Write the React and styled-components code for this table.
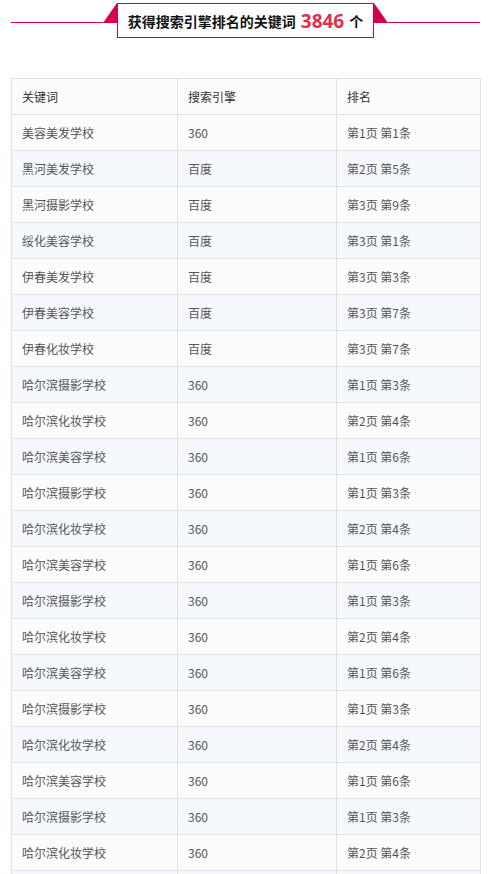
import React from "react";
import styled, { createGlobalStyle } from "styled-components";

const Global = createGlobalStyle`
  html, body { margin: 0; padding: 0; background: #fff; }
  body { font-family: "Noto Sans CJK SC", "Noto Sans", sans-serif; }
`;

const RED = "#d5004c";

const Page = styled.div`
  width: 492px;
  padding: 3px 12px 0 11px;
  box-sizing: border-box;
`;

const TitleBar = styled.div`
  display: flex;
  align-items: flex-start;
`;

const Line = styled.div`
  flex: 1;
  height: 1px;
  margin-top: 19px;
  background: ${RED};
`;

const Flap = styled.div`
  width: 14px;
  height: 20px;
  background: ${RED};
  clip-path: ${(p) =>
    p.$side === "left"
      ? "polygon(100% 0, 100% 100%, 0 100%)"
      : "polygon(0 0, 100% 100%, 0 100%)"};
`;

const Badge = styled.div`
  width: 257px;
  height: 35px;
  box-sizing: border-box;
  border: 1px solid ${RED};
  background: #fff;
  display: flex;
  align-items: center;
  justify-content: center;
  gap: 5px;
  font-size: 14px;
  font-weight: 700;
  color: #111;
  padding-top: 1px;
`;

const Count = styled.span`
  color: #e2304a;
  font-size: 19px;
  font-weight: 700;
  font-family: "Open Sans", "Noto Sans", sans-serif;
  line-height: 1;
`;

const Table = styled.table`
  margin-top: 40px;
  width: 469px;
  border-collapse: collapse;
  table-layout: fixed;
  font-size: 12px;
`;

const Row = styled.tr`
  height: 36px;
  background: ${(p) => (p.$alt ? "#f5f9fe" : "#fcfcfc")};
`;

const Cell = styled.td`
  padding: 0 0 0 10px;
  border: 1px solid #e1e1e1;
  color: ${(p) => (p.$head ? "#333" : "#555")};
  font-weight: 400;
  text-align: left;
  white-space: nowrap;
  vertical-align: middle;
`;

const rows = [
  ["美容美发学校", "360", "第1页 第1条"],
  ["黑河美发学校", "百度", "第2页 第5条"],
  ["黑河摄影学校", "百度", "第3页 第9条"],
  ["绥化美容学校", "百度", "第3页 第1条"],
  ["伊春美发学校", "百度", "第3页 第3条"],
  ["伊春美容学校", "百度", "第3页 第7条"],
  ["伊春化妆学校", "百度", "第3页 第7条"],
];
const cycle = [
  ["哈尔滨摄影学校", "360", "第1页 第3条"],
  ["哈尔滨化妆学校", "360", "第2页 第4条"],
  ["哈尔滨美容学校", "360", "第1页 第6条"],
];
for (let i = 0; i < 15; i++) rows.push(cycle[i % 3]);

const widths = [166, 159, 144];

export default function App() {
  return (
    <Page>
      <Global />
      <TitleBar>
        <Line />
        <Flap $side="left" />
        <Badge>
          <span>获得搜索引擎排名的关键词</span>
          <Count>3846</Count>
          <span>个</span>
        </Badge>
        <Flap $side="right" />
        <Line />
      </TitleBar>
      <Table>
        <colgroup>
          {widths.map((w) => (
            <col key={w} style={{ width: `${w}px` }} />
          ))}
        </colgroup>
        <thead>
          <Row>
            <Cell as="th" $head>关键词</Cell>
            <Cell as="th" $head>搜索引擎</Cell>
            <Cell as="th" $head>排名</Cell>
          </Row>
        </thead>
        <tbody>
          {rows.map((r, i) => (
            <Row key={i} $alt={i % 2 === 1}>
              <Cell>{r[0]}</Cell>
              <Cell>{r[1]}</Cell>
              <Cell>{r[2]}</Cell>
            </Row>
          ))}
        </tbody>
      </Table>
    </Page>
  );
}
